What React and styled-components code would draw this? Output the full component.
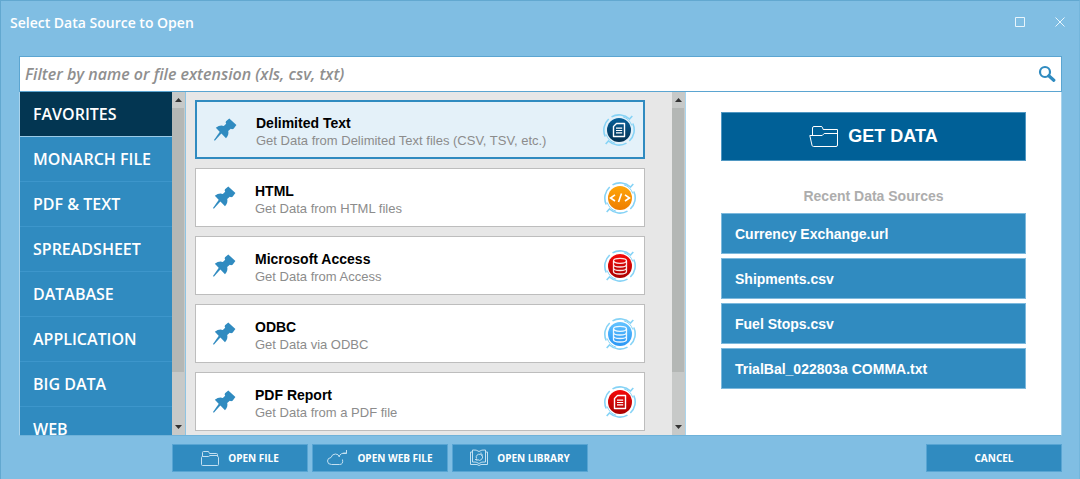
import React, { useState } from 'react';
import styled, { createGlobalStyle } from 'styled-components';

const sans = `'Open Sans', 'Noto Sans', sans-serif`;
const arial = `'Liberation Sans', Arial, sans-serif`;

const GlobalStyle = createGlobalStyle`
  * {
    box-sizing: border-box;
  }

  body {
    margin: 0;
    background: #a3d0e8;
  }

  button,
  input {
    font: inherit;
    border-radius: 0;
  }
`;

const Window = styled.div`
  display: flex;
  flex-direction: column;
  height: 100vh;
  min-height: 320px;
  padding: 0 17px 7px 18px;
  border: 1px solid #62a8d0;
  border-right-color: #74b6dc;
  border-bottom: 0;
  background: #80bee3;
  font-family: ${sans};
`;

const TitleBar = styled.header`
  display: flex;
  flex: none;
  justify-content: space-between;
  align-items: center;
  height: 55px;
  margin: 0 -9px;
  padding-bottom: 13px;
`;

const Title = styled.h1`
  margin: 0;
  color: #fff;
  font-size: 14px;
  font-weight: 600;
`;

const WindowControls = styled.div`
  display: flex;
  gap: 18px;
`;

const WindowButton = styled.button`
  display: flex;
  justify-content: center;
  align-items: center;
  width: 22px;
  height: 22px;
  padding: 0;
  border: 0;
  background: none;
  color: #e8f5fc;
`;

const SearchBox = styled.div`
  display: flex;
  flex: none;
  align-items: center;
  height: 36px;
  padding: 0 5px;
  border: 1px solid #5ba5d1;
  background: #fff;
`;

const SearchInput = styled.input`
  flex: 1;
  min-width: 0;
  padding: 0;
  border: 0;
  outline: 0;
  background: none;
  color: #333;
  font-size: 16px;
  font-style: italic;
  font-weight: 600;

  &::placeholder {
    color: #8f8f8f;
    opacity: 1;
  }
`;

const SearchButton = styled.button`
  display: flex;
  padding: 0;
  border: 0;
  background: none;
  color: #2f8bc0;
`;

const Panels = styled.main`
  display: flex;
  flex: 1;
  min-height: 0;
  border: 1px solid #a9d3ec;
  border-top: 0;
  border-bottom-color: #6fb2d9;
  background: #fff;
`;

const Sidebar = styled.nav`
  display: flex;
  flex: none;
  width: 166px;
  border-right: 1px solid #8fc4e2;
`;

const CategoryList = styled.ul`
  flex: 1;
  margin: 0;
  padding: 0;
  overflow: hidden;
  list-style: none;
  background: #308bc0;
`;

const CategoryButton = styled.button`
  display: block;
  width: 100%;
  height: 45px;
  padding: 0 13px;
  border: 0;
  border-bottom: 1px solid ${({ $active }) => ($active ? '#9bcbe7' : '#3d96cb')};
  background: ${({ $active }) => ($active ? '#033652' : '#308bc0')};
  color: #fff;
  font-size: 16px;
  font-weight: 600;
  text-align: left;
`;

const Bar = styled.div`
  display: flex;
  flex: none;
  flex-direction: column;
  width: 13px;
  background: #c7c9c8;
`;

const BarButton = styled.button`
  display: flex;
  flex: none;
  justify-content: center;
  align-items: center;
  width: 13px;
  height: 16px;
  padding: 0;
  border: 0;
  background: none;
`;

const Track = styled.div`
  flex: 1;
`;

const Thumb = styled.div`
  height: 85%;
  margin-right: 1px;
  background: #b4b7b5;
`;

const SourcePanel = styled.section`
  display: flex;
  flex: none;
  width: 500px;
  border-right: 1px solid #a9d5ee;
  background: #e7e7e7;
`;

const SourceList = styled.ul`
  display: flex;
  flex: 1;
  flex-direction: column;
  gap: 9px;
  min-width: 0;
  margin: 0;
  padding: 8px 27px 0 9px;
  overflow: hidden;
  list-style: none;
`;

const SourceCard = styled.button`
  display: flex;
  align-items: center;
  width: 100%;
  height: 59px;
  padding: 0 8px 0 16px;
  border: ${({ $selected }) => ($selected ? '2px solid #308bc0' : '1px solid #bdbdbd')};
  background: ${({ $selected }) => ($selected ? '#e4f1f9' : '#fff')};
  font-family: ${arial};
  text-align: left;
`;

const SourceText = styled.span`
  display: flex;
  flex: 1;
  flex-direction: column;
  padding: 4px 0 0 19px;
`;

const SourceName = styled.span`
  color: #000;
  font-size: 14px;
  font-weight: 700;
  line-height: 18px;
`;

const SourceHint = styled.span`
  color: #8c8c8c;
  font-size: 13px;
  line-height: 17px;
`;

const RecentPanel = styled.aside`
  flex: 1;
  min-width: 0;
  padding: 20px 35px 0;
  font-family: ${arial};
`;

const GetDataButton = styled.button`
  display: flex;
  justify-content: center;
  align-items: center;
  gap: 10px;
  width: 100%;
  height: 49px;
  border: 1px solid #4f97c2;
  background: #006097;
  color: #fff;
  font-size: 18px;
  font-weight: 700;
`;

const RecentTitle = styled.h2`
  margin: 26px 0 7px;
  color: #adadad;
  font-size: 14px;
  font-weight: 700;
  line-height: 19px;
  text-align: center;
`;

const RecentList = styled.ul`
  display: flex;
  flex-direction: column;
  gap: 4px;
  margin: 0;
  padding: 0;
  list-style: none;
`;

const RecentButton = styled.button`
  display: block;
  width: 100%;
  height: 41px;
  padding: 0 13px;
  border: 1px solid #7db9dd;
  background: #308bc0;
  color: #fff;
  font-size: 14px;
  font-weight: 700;
  text-align: left;
`;

const Footer = styled.footer`
  display: flex;
  flex: none;
  gap: 4px;
  padding: 8px 0 0 153px;
`;

const FooterButton = styled.button`
  display: flex;
  justify-content: center;
  align-items: center;
  gap: 9px;
  width: 136px;
  height: 28px;
  margin-left: ${({ $end }) => ($end ? 'auto' : '0')};
  padding: 0;
  border: 1px solid #58a5d3;
  background: #308bc0;
  color: #fff;
  font-size: 10px;
  font-weight: 700;
`;

const PinIcon = () => (
  <svg width="24" height="24" viewBox="0 0 24 24" fill="#308bc0" aria-hidden="true">
    <path d="M16.3.6 23.400 7l-2.800 3.800q-1.600.8-2.800 0L15.200 13q1 3.800-2.200 7.200L2.800 9.800Q7 6.600 10.800 8l2.400-2.200q-1-1.400-.2-2.600z" />
    <path d="M7 13.400 1 22l.8.7 7-7.600z" />
  </svg>
);

const glyphs = {
  document: (
    <g fill="none" stroke="#fff" strokeWidth="1.400">
      <path d="M13.500 9.500h8v13h-11v-10z" strokeLinejoin="round" />
      <path d="M13 14.200h6.200M13 16.500h6.200M13 18.800h6.200" strokeWidth="1.200" />
    </g>
  ),
  code: (
    <g fill="none" stroke="#fff" strokeWidth="1.600">
      <path d="M11 12.800 6.500 16l4.500 3M21 12.800l4.500 3.200-4.500 3M17.500 11.500l-3 8.500" />
    </g>
  ),
  database: (
    <g fill="none" stroke="#fff" strokeWidth="1.300" strokeOpacity=".9">
      <ellipse cx="16" cy="10.800" rx="6.500" ry="2.500" />
      <path d="M9.500 11v10.500c0 1.400 2.900 2.500 6.500 2.500s6.500-1.100 6.500-2.500V11M9.500 14.500c0 1.400 2.900 2.500 6.500 2.500s6.500-1.100 6.500-2.500M9.500 18c0 1.400 2.900 2.500 6.500 2.500s6.500-1.100 6.500-2.500" />
    </g>
  ),
};

const SourceBadge = ({ id, colors, glyph }) => (
  <svg width="32" height="32" viewBox="0 0 32 32" aria-hidden="true">
    <defs>
      <linearGradient id={`badge-${id}`} x1="0" y1="0" x2="0" y2="1">
        <stop offset="0" stopColor={colors[0]} />
        <stop offset="1" stopColor={colors[1]} />
      </linearGradient>
    </defs>
    <g fill="none" stroke="#86d3f6" strokeWidth="1.600">
      <path d="M8.500 2.900A15.200 15.200 0 0 1 26.500 5l2.800-3" />
      <path d="M29.800 9.500A15.200 15.200 0 0 1 26.300 27" />
      <path d="M23.500 29.100A15.200 15.200 0 0 1 5.500 27l-2.800 3" />
      <path d="M2.200 22.500A15.200 15.200 0 0 1 5.700 5" />
      <path d="M20 2.800A13.600 13.600 0 0 1 28.800 11.500M12 29.200A13.600 13.600 0 0 1 3.200 20.500" strokeWidth="1" />
    </g>
    <circle cx="16" cy="16" r="12" fill={`url(#badge-${id})`} />
    {glyphs[glyph]}
  </svg>
);

const FolderIcon = () => (
  <svg width="29" height="22" viewBox="0 0 29 22" fill="none" stroke="currentColor" strokeLinejoin="round" aria-hidden="true">
    <path d="M3.500 9V2q0-1.500 1.500-1.500h7q1.300 0 1.600 1.200l.5 1.800H28.500v15.500q0 1.500-1.500 1.500H4.500q-1.200 0-1.500-1.200L.8 9.500h12.400l2-2H28.500" />
  </svg>
);

const FileIcon = () => (
  <svg width="18" height="15" viewBox="0 0 18 15" fill="none" stroke="#c3e0f1" aria-hidden="true">
    <path d="M1.500 5.500v-4q0-1 1-1h5l1 2h7q1 0 1 1v2M1.500 5.500h6l1.500-1h7.500M1.500 5.500q-1 0-1 1v7q0 1 1 1h15q1 0 1-1v-7q0-1-1-1" />
  </svg>
);

const CloudIcon = () => (
  <svg width="21" height="16" viewBox="0 0 21 16" fill="none" stroke="#c3e0f1" aria-hidden="true">
    <path d="M15.500 9.500q1 5-3 5h-8q-4 0-4-3.500 0-3 3.500-3.500Q5 4 8.500 4q3 0 4 3M12 7q1-4.500 7.500-4M19.500 0v3.500H16" />
  </svg>
);

const LibraryIcon = () => (
  <svg width="18" height="18" viewBox="0 0 18 18" fill="none" stroke="#c3e0f1" aria-hidden="true">
    <path d="M9 2.500Q6.500.5 2.500 1v12q4-.5 6.500 1.500 2.500-2 6.500-1.500V1Q11.500.5 9 2.500M2.500 3h-2v12.500H7q2 2 4 0h6.500V3h-2" />
    <path d="M6.500 9.500a3 3 0 0 1 4-4M11.500 6a3 3 0 0 1-4 4.500M11 3.500v2.500h2M5 10.500h2V12" />
  </svg>
);

const SearchIcon = () => (
  <svg width="18" height="18" viewBox="0 0 18 18" fill="none" stroke="currentColor" aria-hidden="true">
    <circle cx="7" cy="7" r="5" strokeWidth="2.200" />
    <path d="m10.800 10.800 5 4.500" strokeWidth="3.200" strokeLinecap="round" />
  </svg>
);

const Scrollbar = () => (
  <Bar>
    <BarButton aria-label="Scroll up">
      <svg width="7" height="4" viewBox="0 0 7 4" fill="#333"><path d="M0 4 3.500 0 7 4z" /></svg>
    </BarButton>
    <Track>
      <Thumb />
    </Track>
    <BarButton aria-label="Scroll down">
      <svg width="7" height="4" viewBox="0 0 7 4" fill="#333"><path d="M0 0 3.500 4 7 0z" /></svg>
    </BarButton>
  </Bar>
);

const categories = ['FAVORITES', 'MONARCH FILE', 'PDF & TEXT', 'SPREADSHEET', 'DATABASE', 'APPLICATION', 'BIG DATA', 'WEB'];

const sources = [
  { id: 'text', name: 'Delimited Text', hint: 'Get Data from Delimited Text files (CSV, TSV, etc.)', glyph: 'document', colors: ['#06609a', '#04304f'] },
  { id: 'html', name: 'HTML', hint: 'Get Data from HTML files', glyph: 'code', colors: ['#ffa60a', '#ee7d00'] },
  { id: 'access', name: 'Microsoft Access', hint: 'Get Data from Access', glyph: 'database', colors: ['#f50a0a', '#a90000'] },
  { id: 'odbc', name: 'ODBC', hint: 'Get Data via ODBC', glyph: 'database', colors: ['#62c3ff', '#2b97f5'] },
  { id: 'pdf', name: 'PDF Report', hint: 'Get Data from a PDF file', glyph: 'document', colors: ['#f50a0a', '#a90000'] },
];

const recent = ['Currency Exchange.url', 'Shipments.csv', 'Fuel Stops.csv', 'TrialBal_022803a COMMA.txt'];

const App = () => {
  const [category, setCategory] = useState('FAVORITES');
  const [selected, setSelected] = useState('text');
  const [filter, setFilter] = useState('');

  return (
    <>
      <GlobalStyle />
      <Window>
        <TitleBar>
          <Title>Select Data Source to Open</Title>
          <WindowControls>
            <WindowButton aria-label="Maximize">
              <svg width="10" height="10" viewBox="0 0 10 10" fill="none" stroke="currentColor"><path d="M.5.5h9v9h-9z" /></svg>
            </WindowButton>
            <WindowButton aria-label="Close">
              <svg width="10" height="10" viewBox="0 0 10 10" fill="none" stroke="currentColor"><path d="m.5.5 9 9M9.500.5l-9 9" /></svg>
            </WindowButton>
          </WindowControls>
        </TitleBar>

        <SearchBox>
          <SearchInput
            aria-label="Filter data sources"
            placeholder="Filter by name or file extension (xls, csv, txt)"
            value={filter}
            onChange={(e) => setFilter(e.target.value)}
          />
          <SearchButton aria-label="Search">
            <SearchIcon />
          </SearchButton>
        </SearchBox>

        <Panels>
          <Sidebar>
            <CategoryList>
              {categories.map((name) => (
                <li key={name}>
                  <CategoryButton $active={name === category} onClick={() => setCategory(name)}>
                    {name}
                  </CategoryButton>
                </li>
              ))}
            </CategoryList>
            <Scrollbar />
          </Sidebar>

          <SourcePanel>
            <SourceList>
              {sources.map((source) => (
                <li key={source.id}>
                  <SourceCard $selected={source.id === selected} onClick={() => setSelected(source.id)}>
                    <PinIcon />
                    <SourceText>
                      <SourceName>{source.name}</SourceName>
                      <SourceHint>{source.hint}</SourceHint>
                    </SourceText>
                    <SourceBadge id={source.id} colors={source.colors} glyph={source.glyph} />
                  </SourceCard>
                </li>
              ))}
            </SourceList>
            <Scrollbar />
          </SourcePanel>

          <RecentPanel>
            <GetDataButton>
              <FolderIcon />
              GET DATA
            </GetDataButton>
            <RecentTitle>Recent Data Sources</RecentTitle>
            <RecentList>
              {recent.map((file) => (
                <li key={file}>
                  <RecentButton>{file}</RecentButton>
                </li>
              ))}
            </RecentList>
          </RecentPanel>
        </Panels>

        <Footer>
          <FooterButton>
            <FileIcon />
            OPEN FILE
          </FooterButton>
          <FooterButton>
            <CloudIcon />
            OPEN WEB FILE
          </FooterButton>
          <FooterButton>
            <LibraryIcon />
            OPEN LIBRARY
          </FooterButton>
          <FooterButton $end>CANCEL</FooterButton>
        </Footer>
      </Window>
    </>
  );
};

export default App;
